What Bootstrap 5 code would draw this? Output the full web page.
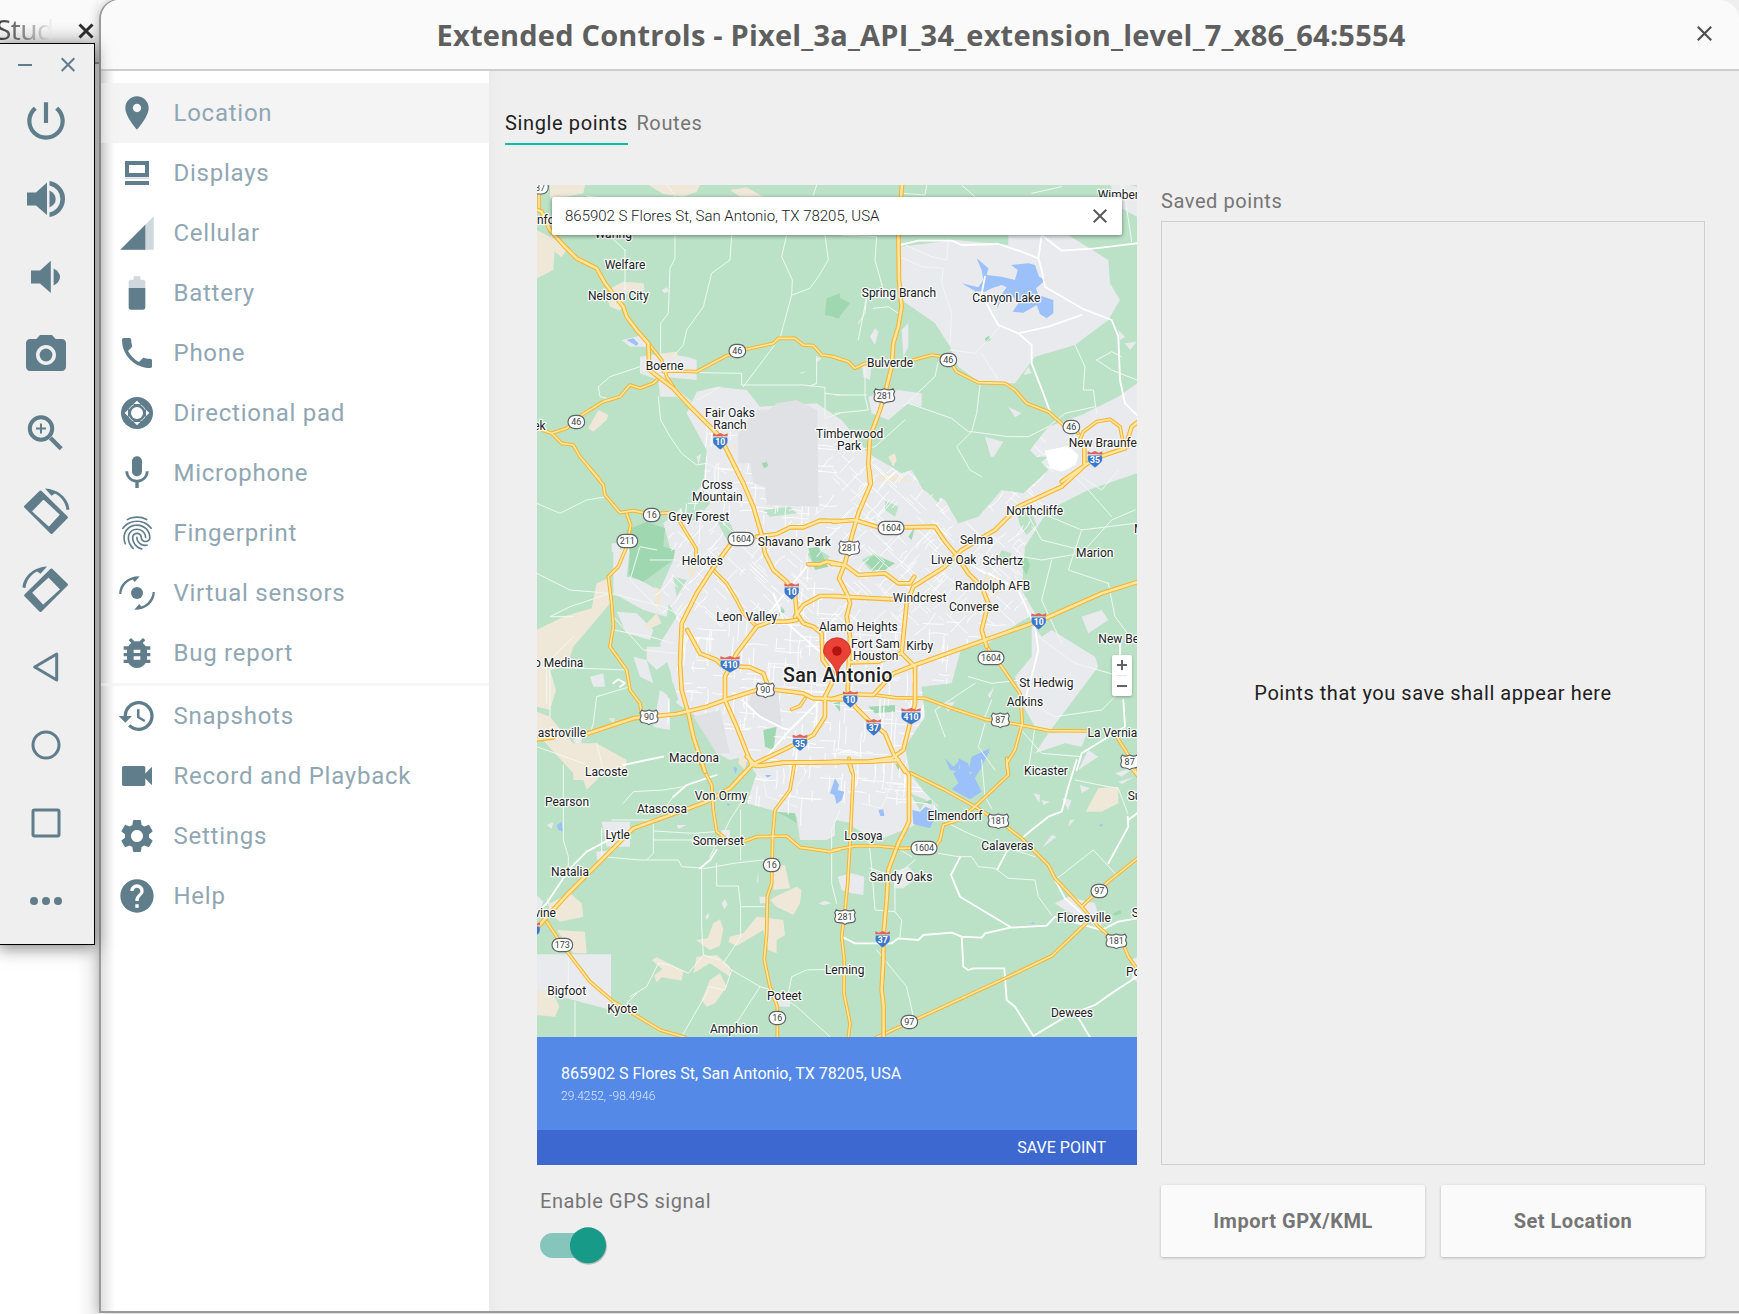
<!DOCTYPE html>
<html lang="en">
<head>
<meta charset="utf-8">
<title>Extended Controls</title>
<meta name="viewport" content="width=device-width, initial-scale=1">
<link href="https://cdn.jsdelivr.net/npm/bootstrap@5.3.0/dist/css/bootstrap.min.css" rel="stylesheet">
<style>
  body{width:1739px;height:1314px;overflow:hidden;background:#fff;font-family:Roboto,"Noto Sans",sans-serif;position:relative}
  svg{display:block;flex:none}
  .desk{position:absolute;inset:0 auto auto 0;width:99px;height:1314px;background:linear-gradient(90deg,rgba(0,0,0,0) 78%,rgba(0,0,0,.08)) #fff}
  .desk-tab{height:64px;background:linear-gradient(180deg,rgba(0,0,0,0) 35%,rgba(0,0,0,.14)),#fafafa;border-bottom:2px solid #989898}
  .desk-tab span{font:28px/1 "Noto Sans",sans-serif;letter-spacing:-.6px;margin-left:-4px;margin-top:3px;width:57px;overflow:hidden;background:linear-gradient(90deg,#444 10%,#999 55%,#eee 95%);-webkit-background-clip:text;color:transparent}
  .emu-bar{position:absolute;left:-2px;top:43px;width:97px;height:902px;background:#efefef;border:1px solid #000;z-index:3;box-shadow:0 3px 16px rgba(0,0,0,.5)}
  .emu-head{height:38px;padding:9px 19px 0 19px}
  .emu-tool{height:78px;padding-right:1px}
  .ink{fill:#607d8b;stroke:#607d8b}
  .win{position:absolute;left:99px;top:-1px;width:1650px;height:1314px;border:2px solid #9b9b9b;border-top-width:1px;border-radius:20px 0 0 0;background:#efefef;z-index:2;overflow:hidden;box-shadow:0 0 12px rgba(0,0,0,.28)}
  .win-title{height:71px;background:#fafafa;border-bottom:2px solid #cdcdcd;width:1638px;position:relative;border-radius:0 20px 0 0}
  .win-title h1{font:700 29px/1 "Open Sans","Noto Sans",sans-serif;color:#5f5f5f;margin:0;letter-spacing:.2px;padding-bottom:1px;padding-left:44px}
  .win-close{margin-right:27px;margin-bottom:3px}
  .win-body{width:1638px;height:1240px}
  .side{width:388px;background:linear-gradient(90deg,rgba(0,0,0,.12),rgba(0,0,0,0) 14px),#fff;padding-top:12px}
  .side-item{height:60px;padding-left:16px;font-size:24px;letter-spacing:.75px;color:#90a7b3;line-height:62px}
  .side-item.current{background:#f4f4f4}
  .side-item svg{margin-right:16.500px}
  .side-rule{height:3px;background:#f6f6f6}
  .pane{padding:34px 34px 0 0;background:linear-gradient(90deg,#ebebeb,#efefef 10px)}
  .lbl{font-size:20px;letter-spacing:.58px;color:#757575;line-height:24px}
  .loc-tabs{padding-left:16px;height:80px}
  .loc-tabs div{height:40px;padding-top:6px;margin-right:8.500px;white-space:nowrap;letter-spacing:.62px}
  .loc-tabs .on{color:#212121;border-bottom:2px solid #00bfa5}
  .cols{padding-left:48px;gap:24px}
  .map-col{width:600px}
  .map-box{width:600px;height:980px;position:relative}
  .find{position:absolute;left:15px;top:12px;width:570px;height:38px;background:#fff;border-radius:2px;box-shadow:0 1px 4px rgba(0,0,0,.45);padding:0 15px 0 13px;font-size:15px;font-weight:300;color:#202124}
  .zoomer{position:absolute;left:575px;top:470px;width:20px;height:41px;background:#fff;border-radius:2px;box-shadow:0 1px 3px rgba(0,0,0,.3)}
  .info{height:93px;background:#5489e8;color:#fff;padding:27px 24px 0;font-size:16px;line-height:20px}
  .info small{display:block;font-size:12px;font-weight:300;line-height:16px;margin-top:4px;opacity:.8}
  .save{height:35px;background:#3c68cf;color:#fff;font-size:16px;padding-right:31px}
  .gps{padding:24px 0 0 3px}
  .gps-switch{width:66px;height:37px;margin-top:14px}
  .saved{width:544px;padding-top:4px}
  .saved-box{height:944px;margin-top:8px;border:1px solid #cfcfcf;color:#212121;padding-bottom:1px;letter-spacing:.54px}
  .acts{margin-top:20px;gap:16px}
  .act{flex:1;height:72px;background:#fafafa;border:0;border-radius:2px;font-size:20px;font-weight:700;letter-spacing:.5px;color:#757575;box-shadow:0 1px 3px rgba(0,0,0,.24)}
  .places text{font-family:Roboto,sans-serif;font-size:36px;fill:#202124;stroke:#fff;stroke-opacity:.85;stroke-width:8px;stroke-linejoin:round;paint-order:stroke}
  .shield text{font-family:Roboto,sans-serif;font-size:27px;fill:#3c4043;text-anchor:middle}
</style>
</head>
<body>

<div class="desk">
  <div class="desk-tab d-flex align-items-start pt-2">
    <span class="pt-1">Stud</span>
    <svg class="ms-auto" style="margin:15px 5px 0 0" width="16" height="16"><path d="M1.500 1.500 14.500 14.500M14.500 1.500 1.500 14.500" stroke="#2f2f2f" stroke-width="3"/></svg>
  </div>
</div>

<div class="emu-bar d-flex flex-column ink">
  <div class="emu-head d-flex justify-content-between">
    <svg width="14" height="24"><path d="M0 12H14" stroke-width="2"/></svg>
    <svg width="14" height="24"><path d="M.7 5.300 13.300 18M13.300 5.300.7 18" stroke-width="2"/></svg>
  </div>
  <div class="emu-tool d-flex align-items-center justify-content-center"><svg width="50" height="50" viewBox="0 0 24 24" stroke="none"><path stroke="none" d="M13 3h-2v10h2V3zm4.830 2.170l-1.420 1.420C17.990 7.860 19 9.810 19 12c0 3.870-3.130 7-7 7s-7-3.130-7-7c0-2.190 1.010-4.140 2.580-5.420L6.170 5.170C4.230 6.820 3 9.260 3 12c0 4.970 4.030 9 9 9s9-4.030 9-9c0-2.740-1.230-5.180-3.170-6.830z"/></svg></div>
  <div class="emu-tool d-flex align-items-center justify-content-center"><svg width="48" height="48" viewBox="-24 -24 48 48"><g stroke="none"><path d="M-19-6.500h9L1-16.500V16L-10 6.500h-9z"/><path d="M3.500-8.500Q9.700-5.500 9.700 0T3.500 8.500z"/><path d="M3.500-18A18.200 18.200 0 0 1 3.500 18v-4.500A13.800 13.800 0 0 0 3.500-13.500z"/></g></svg></div>
  <div class="emu-tool d-flex align-items-center justify-content-center"><svg width="48" height="48" viewBox="-24 -24 48 48"><g stroke="none"><path d="M-15-6.500h9L4.800-16.300V16L-6 6.500h-9z"/><path d="M7.600-8.500Q14-5 14 0T7.600 8.500z"/></g></svg></div>
  <div class="emu-tool d-flex align-items-center justify-content-center"><svg width="48" height="48" viewBox="0 0 24 24"><g stroke="none"><circle cx="12" cy="12" r="3.200"/><path d="M9 2L7.170 4H4c-1.100 0-2 .9-2 2v12c0 1.100.9 2 2 2h16c1.100 0 2-.9 2-2V6c0-1.100-.9-2-2-2h-3.170L15 2H9zm3 15c-2.760 0-5-2.240-5-5s2.240-5 5-5 5 2.240 5 5-2.240 5-5 5z"/></g></svg></div>
  <div class="emu-tool d-flex align-items-center justify-content-center"><svg width="48" height="48" viewBox="-24 -24 48 48"><circle cx="-5" cy="-4.500" r="11.200" fill="none" stroke-width="4"/><path d="M-10-4.500H0M-5-9.500V.5" stroke-width="2"/><path d="M4.500 5 15.200 15.700" stroke-width="4.400"/></svg></div>
  <div class="emu-tool d-flex align-items-center justify-content-center"><svg width="50" height="50" viewBox="-25 -25 50 50"><g id="rot"><path fill-rule="evenodd" stroke-width="2.400" stroke-linejoin="round" d="M-20.800-4.300-5.400-19.300 20.700 6.300 5.500 21.800zM-15.700.5-2.600-13.200 15.500 3.500 3 17.300z"/><path d="M-1-22.500C12-22 22.500-13 23.500-1.500L20.500-1C19.500-9 15-14.500 9-17.500L5.500-15.300z" stroke="none"/></g></svg></div>
  <div class="emu-tool d-flex align-items-center justify-content-center"><svg width="50" height="50" viewBox="-25 -25 50 50"><use href="#rot" transform="scale(-1 1)"/></svg></div>
  <div class="emu-tool d-flex align-items-center justify-content-center"><svg width="48" height="48" viewBox="-24 -24 48 48"><path d="M-11.300 0 10.700-13V13z" fill="none" stroke-width="3" stroke-linejoin="round"/></svg></div>
  <div class="emu-tool d-flex align-items-center justify-content-center"><svg width="48" height="48" viewBox="-24 -24 48 48"><circle r="13" fill="none" stroke-width="3"/></svg></div>
  <div class="emu-tool d-flex align-items-center justify-content-center"><svg width="48" height="48" viewBox="-24 -24 48 48"><rect x="-13" y="-13" width="26" height="26" rx="1.500" fill="none" stroke-width="3"/></svg></div>
  <div class="emu-tool d-flex align-items-center justify-content-center"><svg width="48" height="48" viewBox="-24 -24 48 48"><g stroke="none"><circle cx="-12" r="4"/><circle r="4"/><circle cx="12" r="4"/></g></svg></div>
</div>

<div class="win">
  <div class="win-title d-flex align-items-center">
    <h1 class="flex-grow-1 text-center text-nowrap">Extended Controls - Pixel_3a_API_34_extension_level_7_x86_64:5554</h1>
    <svg class="win-close" width="15" height="15"><path d="M.8.8 14.200 14.200M14.200.8.8 14.200" stroke="#505050" stroke-width="2.200"/></svg>
  </div>
  <div class="win-body d-flex">
    <nav class="side flex-shrink-0" id="side"></nav>
    <main class="pane flex-grow-1">
      <div class="loc-tabs d-flex lbl"><div class="on">Single points</div><div>Routes</div></div>
      <div class="cols d-flex">
        <section class="map-col">
          <div class="map-box">
            <svg id="map" width="600" height="852" viewBox="537 185 600 852" style="background:#bbe2c6"></svg>
            <div class="find d-flex align-items-center justify-content-between"><span>865902 S Flores St, San Antonio, TX 78205, USA</span><svg width="14" height="14"><path d="M.7.7 13.300 13.300M13.300.7.7 13.300" stroke="#5a5a5a" stroke-width="2"/></svg></div>
            <div class="zoomer"><svg width="20" height="41"><path d="M5 10H15M10 5V15M5 31H15" stroke="#5f6368" stroke-width="2"/><path d="M5 20.500H15" stroke="#e6e6e6"/></svg></div>
            <div class="info">865902 S Flores St, San Antonio, TX 78205, USA<small>29.4252, -98.4946</small></div>
            <div class="save d-flex align-items-center justify-content-end">SAVE POINT</div>
          </div>
          <div class="gps">
            <div class="lbl">Enable GPS signal</div>
            <svg class="gps-switch" viewBox="0 0 66 37" overflow="visible"><rect y="6" width="60" height="25" rx="12.500" fill="#86c5bc"/><circle cx="48.500" cy="19.200" r="18.500" fill="#000" opacity=".22"/><circle cx="48" cy="18.300" r="18" fill="#189a89"/></svg>
          </div>
        </section>
        <section class="saved">
          <div class="lbl">Saved points</div>
          <div class="saved-box d-flex align-items-center justify-content-center lbl">Points that you save shall appear here</div>
          <div class="acts d-flex"><button class="act">Import GPX/KML</button><button class="act">Set Location</button></div>
        </section>
      </div>
    </main>
  </div>
</div>

<script>
// Navigation entries: label and icon on a 24-unit grid
const nav = [
 ['Location','<path d="M12 2C8.130 2 5 5.130 5 9c0 5.250 7 13 7 13s7-7.750 7-13c0-3.870-3.130-7-7-7zm0 9.500c-1.380 0-2.500-1.120-2.500-2.500s1.120-2.500 2.500-2.500 2.500 1.120 2.500 2.500-1.120 2.500-2.500 2.500z"/>'],
 ['Displays','<path fill-rule="evenodd" d="M4.800 4.800H19.200V14.400H4.800zM7.200 7.200V12H16.800V7.200z"/><path d="M4.800 16.800H19.200V19.200H4.800z"/><path opacity=".55" d="M4.800 14.800H19.200V15.300H4.800z"/>'],
 ['Cellular','<path opacity=".3" d="M2 22h20V2z"/><path d="M17 7L2 22h15z"/>'],
 ['Battery','<path opacity=".3" d="M17 5.330C17 4.600 16.400 4 15.670 4H14V2h-4v2H8.330C7.600 4 7 4.600 7 5.330V9h10z"/><path d="M7 9v11.670C7 21.400 7.600 22 8.330 22h7.330c.74 0 1.340-.6 1.340-1.330V9z"/>'],
 ['Phone','<path d="M6.620 10.790c1.440 2.830 3.760 5.140 6.590 6.590l2.200-2.200c.27-.27.67-.36 1.020-.24 1.120.37 2.330.57 3.570.57.55 0 1 .45 1 1V20c0 .55-.45 1-1 1-9.390 0-17-7.610-17-17 0-.55.45-1 1-1h3.500c.55 0 1 .45 1 1 0 1.250.2 2.450.57 3.570.11.35.03.74-.25 1.020l-2.200 2.200z"/>'],
 ['Directional pad','<circle cx="12" cy="12" r="9.600"/><g fill="#fff"><circle cx="12" cy="12" r="3.600"/><path d="M12 4.600 14 6.600H10zM12 19.400 14 17.400H10zM4.600 12 6.600 10V14zM19.400 12 17.400 10V14z"/></g><circle cx="12" cy="12" r="5.300" fill="none" stroke="#fff" stroke-width=".45" stroke-dasharray="4.160 4.160" stroke-dashoffset="-2.080"/>'],
 ['Microphone','<path d="M12 14c1.660 0 2.990-1.340 2.990-3L15 5c0-1.660-1.340-3-3-3S9 3.340 9 5v6c0 1.660 1.340 3 3 3zm5.300-3c0 3-2.540 5.100-5.300 5.100S6.700 14 6.700 11H5c0 3.410 2.720 6.230 6 6.720V21h2v-3.280c3.280-.48 6-3.300 6-6.720h-1.700z"/>'],
 ['Fingerprint','<path d="M17.810 4.470c-.08 0-.16-.02-.23-.06C15.660 3.420 14 3 12.010 3c-1.980 0-3.860.47-5.570 1.410-.24.13-.54.04-.68-.2-.13-.24-.04-.55.2-.68C7.820 2.520 9.860 2 12.010 2c2.130 0 3.990.47 6.030 1.520.25.13.34.43.21.67-.09.18-.26.28-.44.28zM3.500 9.720c-.1 0-.2-.03-.29-.09-.23-.16-.28-.47-.12-.7.99-1.400 2.250-2.500 3.750-3.270C9.980 4.040 14 4.030 17.150 5.650c1.500.77 2.760 1.860 3.750 3.250.16.22.11.54-.12.7-.23.16-.54.11-.7-.12-.9-1.260-2.040-2.250-3.390-2.940-2.870-1.470-6.540-1.470-9.400.01-1.360.7-2.500 1.700-3.400 2.960-.08.14-.23.21-.39.21zm6.250 12.070c-.13 0-.26-.05-.35-.15-.87-.87-1.340-1.430-2.010-2.640-.69-1.230-1.050-2.730-1.050-4.340 0-2.970 2.540-5.390 5.660-5.390s5.660 2.420 5.660 5.390c0 .28-.22.5-.5.5s-.5-.22-.5-.5c0-2.420-2.090-4.390-4.660-4.390-2.570 0-4.660 1.970-4.660 4.390 0 1.440.32 2.770.93 3.850.64 1.150 1.080 1.640 1.850 2.420.19.2.19.51 0 .71-.11.1-.24.15-.37.15zm7.170-1.850c-1.190 0-2.240-.3-3.100-.89-1.490-1.010-2.380-2.650-2.380-4.390 0-.28.22-.5.5-.5s.5.22.5.5c0 1.410.72 2.740 1.940 3.560.71.48 1.540.71 2.540.71.24 0 .64-.03 1.040-.1.27-.05.53.13.58.41.05.27-.13.53-.41.58-.57.11-1.070.12-1.210.12zM14.910 22c-.04 0-.09-.01-.13-.02-1.590-.44-2.630-1.030-3.720-2.100-1.400-1.390-2.170-3.240-2.170-5.220 0-1.620 1.380-2.940 3.080-2.940 1.700 0 3.080 1.320 3.080 2.940 0 1.070.93 1.940 2.080 1.940s2.080-.87 2.080-1.940c0-3.770-3.250-6.830-7.250-6.830-2.840 0-5.440 1.580-6.610 4.030-.39.81-.59 1.760-.59 2.800 0 .78.07 2.010.67 3.610.1.26-.03.55-.29.64-.26.1-.55-.04-.64-.29-.49-1.310-.73-2.610-.73-3.960 0-1.200.23-2.290.68-3.240 1.330-2.790 4.280-4.600 7.510-4.600 4.550 0 8.250 3.510 8.250 7.830 0 1.620-1.380 2.940-3.080 2.940s-3.080-1.320-3.080-2.940c0-1.070-.93-1.940-2.080-1.940s-2.080.87-2.080 1.940c0 1.710.66 3.310 1.870 4.510.95.94 1.860 1.460 3.270 1.850.27.07.42.35.35.61-.05.23-.26.38-.47.38z"/>'],
 ['Virtual sensors','<circle cx="12" cy="12" r="3.600"/><g id="vs"><path d="M1.300 12.600C1.300 6.500 6.500 1.700 13.600 1.900L10.700 5.400 9.300 3.900C5.500 5.300 3 8.600 2.600 12.600z"/></g><use href="#vs" transform="rotate(180 12 12)"/>'],
 ['Bug report','<path d="M20 8h-2.810c-.45-.78-1.070-1.450-1.820-1.960L17 4.410 15.590 3l-2.170 2.170C12.960 5.060 12.490 5 12 5c-.49 0-.96.06-1.410.17L8.410 3 7 4.410l1.620 1.630C7.880 6.550 7.260 7.220 6.810 8H4v2h2.090c-.05.33-.09.66-.09 1v1H4v2h2v1c0 .34.04.67.09 1H4v2h2.810c1.040 1.790 2.970 3 5.190 3s4.150-1.210 5.190-3H20v-2h-2.090c.05-.33.09-.66.09-1v-1h2v-2h-2v-1c0-.34-.04-.67-.09-1H20V8zm-6 8h-4v-2h4v2zm0-4h-4v-2h4v2z"/>'],
 null,
 ['Snapshots','<path d="M13 3c-4.970 0-9 4.030-9 9H1l3.890 3.890.07.14L9 12H6c0-3.870 3.130-7 7-7s7 3.130 7 7-3.130 7-7 7c-1.930 0-3.680-.79-4.940-2.060l-1.420 1.420C8.270 19.990 10.510 21 13 21c4.970 0 9-4.030 9-9s-4.030-9-9-9zm-1 5v5l4.280 2.540.72-1.210-3.500-2.080V8H12z"/>'],
 ['Record and Playback','<path d="M17 10.500V7c0-.55-.45-1-1-1H4c-.55 0-1 .45-1 1v10c0 .55.45 1 1 1h12c.55 0 1-.45 1-1v-3.500l4 4v-11l-4 4z"/>'],
 ['Settings','<path d="M19.140 12.940c.04-.3.06-.61.06-.94 0-.32-.02-.64-.07-.94l2.030-1.580c.18-.14.23-.41.12-.61l-1.920-3.320c-.12-.22-.37-.29-.59-.22l-2.390.96c-.5-.38-1.030-.7-1.620-.94l-.36-2.540c-.04-.24-.24-.41-.48-.41h-3.840c-.24 0-.43.17-.47.41l-.36 2.540c-.59.24-1.130.57-1.620.94l-2.390-.96c-.22-.08-.47 0-.59.22L2.740 8.870c-.12.21-.08.47.12.61l2.030 1.580c-.05.3-.09.63-.09.94s.02.64.07.94l-2.030 1.580c-.18.14-.23.41-.12.61l1.920 3.320c.12.22.37.29.59.22l2.390-.96c.5.38 1.030.7 1.620.94l.36 2.540c.05.24.24.41.48.41h3.840c.24 0 .44-.17.47-.41l.36-2.540c.59-.24 1.130-.56 1.620-.94l2.390.96c.22.08.47 0 .59-.22l1.920-3.320c.12-.22.07-.47-.12-.61l-2.010-1.580zM12 15.600c-1.980 0-3.600-1.620-3.600-3.600s1.620-3.600 3.600-3.600 3.600 1.620 3.600 3.600-1.620 3.600-3.600 3.600z"/>'],
 ['Help','<path d="M12 2C6.480 2 2 6.480 2 12s4.480 10 10 10 10-4.480 10-10S17.520 2 12 2zm1 17h-2v-2h2v2zm2.070-7.750l-.9.920C13.450 12.900 13 13.500 13 15h-2v-.5c0-1.100.45-2.100 1.170-2.830l1.240-1.260c.37-.36.59-.86.59-1.410 0-1.100-.9-2-2-2s-2 .9-2 2H8c0-2.210 1.790-4 4-4s4 1.790 4 4c0 .88-.36 1.680-.93 2.250z"/>']
];
document.getElementById('side').innerHTML = nav.map((n,i)=> n
  ? `<div class="side-item d-flex align-items-center${i?'':' current'}"><svg width="40" height="40" viewBox="0 0 24 24" fill="#607d8b">${n[1]}</svg>${n[0]}</div>`
  : '<div class="side-rule"></div>').join('');

// Map sheets, each drawn at three units per pixel from its own origin
const sheet = {A:[530,180],B:[835,180],C:[530,470],D:[835,470],E:[530,760],F:[835,760]};
const at = (k,body)=>`<g transform="translate(${sheet[k]}) scale(.33333)">${body}</g>`;
const paths = o => Object.keys(o).map(k=>at(k,`<path d="${o[k]}"/>`)).join('');

const urban = {
 C:'M470-170 500-235 560-250 650-240 690-190 860-200 935-150 1015-50 1115 10 1145 0 1180 60 1245 90 1285 160 1345 140 1415 60 1480 70 1555 0 1500-60 1555-130 1695-180 1821-190V10L1675 60 1555 120 1485 230 1475 360 1515 430 1415 490 1375 520 1295 530 1265 640 1175 650 1185 740 1125 830 1140 910 1225 1020 1145 1070 1045 1110 965 1070 890 1110H810L800 1040 650 1000 680 910 640 860 600 870 560 850 500 740 440 700 420 600 390 520 440 440 390 360 430 270 400 160 470 100 520 40 530-60zM250 245 300 230 290 320 250 330zM250 310 330 330 420 380 410 440 340 420 250 370zM260 425 320 430 370 480 360 510 290 490zM350 530 400 530 420 570 380 600 350 570zM390 660 420 680 420 780 370 770zM310 560 350 570 370 640 330 620zM130 810 160 780 150 840zM180 620 220 610 225 650 190 650zM245 220h25v25h-25z',
 B:'M195 200 360 180 520 195V165H700L820 240 825 310 855 360 820 420 720 495 600 530 540 610H510L430 605 370 560 345 500 300 430 200 360zM820 0 906 20V110L850 80zM105 470l15-25 10 10-10 40zM200 450l20-20V500l-15 30zM80 550h30l-5 50-20-10zM100 650 190 630 260 640V680L220 670 160 720 110 700zM520 680l40 20-20 12zM450 770l55 15-35 55zM850 450l20 20-15 10zM870 490l35-5-20 25zM565 585l15-25 10 20zM750 700l100-50 56-40V860L850 790 740 740z',
 A:'M275 480 340 465 350 500 300 500zM330 530 400 520 470 530 500 540 500 600 400 590 490 670 470 675 440 650 390 650 385 600 330 580zM395 330l15-8 8 12-15 6zM500 830l15-10-10 35zM812 577l20-3-20 8zM860 530l15 5-15 12z',
 D:'M590 460 620 500 650 480 780 560 790 590 640 790 600 770 560 700 540 620 590 560zM440 650l40-5-15 40zM320 700l40-5-20 30zM640 790 760 780 740 830 690 820 600 850zM760 840l30 20-60 40zM740 440l60-20 20 30-60 40z',
 E:'M20 583H243V750L130 720 20 690zM215 185h85v75h-70zM198 275l60-5-55 35zM20 405l20 20-20 50zM575 430l10-12 8 15-10 15zM526 470l8-12 4 10-8 12zM575 210h25v35h-30zM440 195h30l-25 12zM865 430l20-8 20 8-25 5zM685 330l-5 40 5-5zM688 410h20v20h-18zM740 700h40v40h-35zM50 195l20-8-5 20z',
 F:'M8 350 50 340 88 350 85 405 50 400 20 390zM175 335 220 320 250 350 205 385 178 385zM660 430 700 410 780 430 800 500 690 450zM595 100l20 5-2 25zM620 120l25 5-20 10zM680 115l30 5-10 30zM650 225l15 5-45 35zM705 180l15-2-20 22zM735 75l30 10-25 15zM840 40l60-20-40 30zM890 600l16-10V665l-16-10zM850 65l50-15-40 22z'
};
const dim = {C:'M680-180 720-182 740-200 800-210 862-180 866 110 710 105 705 50 670 40 660-20 625-20V-110zM680 640 745 660 755 770 690 745 655 700zM490 740 570 720 600 850 560 850z'};
const sand = {
 A:'M60 15H165L160 40 110 50 60 55zM20 150 60 170 75 190 70 270 20 295zM60 160 115 200 95 232 75 215zM355 15H510L500 35 460 50 400 42zM600 30 650 22 700 50H630zM250 320 280 305 340 310 345 330 290 340 270 392 240 380 230 350zM175 745 205 690 235 705 230 720 190 755zM400 520l40-5 5 20h-40zM605 790l15 5-5 20z',
 C:'M20 480 100 440 185 415 200 340 235 325 240 400 190 460 130 530 110 590 60 600 78 660 60 720 20 710zM20 725 60 740 100 790 130 820 200 820 290 870 285 910H130L20 790zM340 470 380 430 395 460 350 480zM470 290l40 5-30 30zM375 350l20 10-5 60-15-10zM630 850l20 20-5 30-20-20zM235 745l20 0-5 15z',
 E:'M130 0H290L230 25 200 60 170 90 160 60 130 60zM50 410 60 430 120 400 155 430 160 470 90 485 60 460zM80 510 165 515 170 580 130 580zM20 690 70 700 88 740 75 770 20 765zM730 320 765 315 780 385 730 390zM735 410 800 380 815 390 810 430 790 465 740 440 720 420zM680 470 760 480 765 525 740 540 740 580 715 570 700 510 620 558 595 545 600 530 640 520zM550 490l20-12 10 30-10 50-30 12-42-30 35-5zM365 600l15-8 80 40-5 30-60-10-15 15-8-20 25-20zM500 590l60-5 40 35 0 30-60-40-50 30zM540 660l30-20 20 40-35 50-25 10-15-20z',
 D:'M445 310l50 20 20 30-50 25-20-40z',
 B:'M160 830l20-10 5 20-10 20zM120 905l30-25 60 10 15 15z',
 F:'M752 155 790 85 850 80 850 130 800 155z'
};
const wood = {
 C:'M290 180 350 155 405 175 400 230 435 240 430 270 340 335 295 315 300 250zM700 780l40-10-10 70-25-10zM835 235l30-5 30 60-40 10zM745 440l10-30 10 15zM910 700l20-5v30z',
 A:'M890 355 930 340V415L885 405zM695 850l15-5 5 12-12 8z',
 B:'M0 345 45 370 10 415 0 415zM450 475l12-8 5 12-15 8z',
 D:'M90 275l30-20 60 25-30 20-35 0zM545 270l30-10 10 25-10 30zM100 710l80-5v20l-60 5zM220 200l20-30-10 40z',
 E:'M735 155l60 5 5 30-30-20z',
 F:'M260 130l30-12 0 15zM835 460l20-10 5 10-22 8zM180 10l20 10-10 10z'
};
const parks = {
 C:'M450 110 520 60 540 100 500 150 470 150zM560 150 600 160 620 200 590 210zM700 120 780 110 800 130 720 140zM430 320 470 330 440 380zM430 640 400 640 420 700 445 690zM665 680 690 690 680 710zM830 250 870 240 900 260 860 300z',
 D:'M150 90 190 110 180 140 150 120zM350 20 440 30 430 90 370 150 345 90zM80 270l40-20 50 30-60 25zM270 60 320 50 310 100zM620 240 700 200 690 260zM250 5l60 20 20 30-60-10zM360 610 500 620 440 700 350 650zM200-40 640-40 560 20 500 0 420 70 340 20zM545 130l40-15 20 50-30 30-20-30zM500 240l30 10-10 30-30-20z',
 F:'M225 100l50 20-20 30zM0 180l50 10 30 70-80-20z'
};
const water = {
 B:'M425 235 460 265 455 285 500 290 540 300 548 270 528 255 580 250 600 255 612 290 632 300 603 325 610 345 655 360 655 400 635 415 615 402 605 375 565 398 533 395 550 370 525 340 500 358 485 388 495 350 515 322 500 315 470 325 450 335 420 333 380 310 430 322 445 300 440 270z',
 F:'M335 0 355 40 375 25 370-5 400 10 405 45 435 0 465-30 440 20 420 55 440 95 405 118 350 88 370 70zM232 150 255 155 272 140 300 152 300 175 285 205 235 192zM0 55 12 75 8 90 28 95 20 120 5 132-2 105-15 100-10 85zM130 150l15-2 3 20-12 0zM585 490l15-3-5 6zM790 195l14-3-5 8z',
 D:'M330 865 355 890 375 870 370 905 345 900zM400 905 410 860 465 835 440 880 430 905z',
 A:'M290 480l20-5 15 15-5 8z',
 E:'M80 195l15-10 3 30-12-5zM590 130l12 3-8 6zM610 20l12 5-6 18zM705 45l20 0-12 8z'
};
const lanes = {
 A:'M170 48 260 60M410 15 435 45V235L420 265 415 400 392 430V520M605 165 600 240 545 280 520 380 470 450 460 495 430 530M770 165 755 230 787 300 785 345 750 475M860 15 850 45M885 165 895 240 865 290 840 325 787 345M285 210V330M235 165 285 210M330 560 240 590 205 620 210 650 230 655M385 650 392 720 420 770 455 820 500 855 530 850 590 880M510 578 635 580V615H820L885 622V715L930 700M640 620 700 540 745 480M885 640 930 645M860 530V610L840 618M500 660 540 640 570 620',
 B:'M20 165 125 170 120 240 145 330M70 480 95 350 90 400 70 430M275 15 270 45 200 40M380 15 420 50M590 40 680 20M860 15 870 50 890 185M90 560V650L100 690 0 700M220 670 350 715 400 755 410 755 520 770 580 770 640 740 690 700 780 680M435 615 425 700 410 755 365 800 405 870 440 890M345 510 420 520 440 500 500 435M440 520 490 600M200 190 290 230 335 240 340 180M195 230 260 260 325 265 320 310 350 400 345 490M310 545 300 590 205 680M720 495 750 560 745 630 775 630 785 700M785 540 830 515 860 530M785 540 830 570 906 600M115 385 160 380 190 400M210 720 120 800 10 820M0 645 95 645',
 C:'M20 100 90 130 170 90 230 80M20 310 120 360 240 370 400 410 460 440M240 370 120 410 60 440 130 440M20 590 160 595 290 600M300 650 200 680 190 760 180 790M200 820 220 900M20 830 160 880M250 440 340 540 440 550M250 480 360 500 430 520M130 500 50 580 50 700M440 270 360 270M380 240 330 230 300 330 400 430M60 600V740',
 D:'M560 100 620 210 740 240M620 130 740 180 900 160M740 180 700 300 820 340M560 260 620 270 740 250 830 150 900 120M820 340 840 440 900 520M610 500 720 580 860 620M650 270 620 390 680 520M560 630 470 640 400 620M590 700 660 740 800 720 860 660M540 300 480 280 430 250M700 0 760 60 830 140M850 0 800 60 740 20M420 640 300 720 330 800M450 760 430 830 480 900M550 770 620 850 740 860M470 690 450 740M600 770 580 900',
 E:'M215 205V290L330 300H445L455 320 530 325 610 310 700 300M515 325V500L520 585M560 310V378H625L632 440V530L580 610 605 630 690 680 725 690M632 440H705M370 180V280L350 300M370 213 490 220 560 215M370 240 500 240M300 710 350 680 385 610 420 615 475 640 520 585 570 600M245 180H370M430 110 400 150M280 130 310 95 400 90 460 80 540 50M605 630 585 690 535 680M455 830 535 690M600 820 690 680M100 15V240L115 290V340M135 725V830M775 700 785 650 830 630 900 628M740 700 800 740 900 830M632 150V300M632 130 600 180 575 230M540 290 560 250M115 590V690M290 730 320 700M700 60 670 30M700 60 710 110 800 140M930 150 905 210 905 370 920 430M840 20 800 80',
 F:'M100 230 110 320 120 450 180 455V350M180 455 200 480 195 530M125 570 215 680 235 770M310 280 370 290 410 290 430 320 480 325 520 355 600 360 610 410 650 465M330 185 400 220 460 245 600 290M660 360 775 270 840 340M440 0 450 110 470 145M720 60 820 80 850 85 878 160M80 130 140 145 170 70M230 290 180 260M150 65 210 120M230 60 310 140M105 325 180 350 240 300'
};
const roads = {
 B:'M195 195 250 182 350 182 380 195 490 192 560 215 610 235 620 270 630 320 740 385 830 420 850 470 855 600 870 670 906 705M620 165 680 212 780 205 905 190M620 165 610 235M450 290 440 340 470 400 490 435 550 460 640 440 740 405M550 460 590 495 590 550 625 640 645 695',
 D:'M460 310 550 360 600 470 610 540 595 600 570 690M865 690 870 770 820 800 740 850 725 900M855 500 855 610M370 260 450 310',
 F:'M725 0 700 80 680 155 640 170 590 210 560 235M515 275 487 328M375 292 348 345 375 410 525 500M20 530 60 550H170L190 535 250 540 265 525 350 518 380 530 440 533 450 520 525 503 635 497 660 470 800 510 850 485 906 475M380 530 385 620 400 630 415 625H508L515 720 540 740 595 828 700 765 780 735 830 700 906 650M728 770 765 832M878 170 880 200 820 310M655 350 690 415 740 460 810 520M906 160 880 180',
 E:'M255 230 170 275 120 325 90 370 50 430 30 450M280 15 350 0 400-10M560 270 540 300 510 325M430 110 470 75 560 45',
 C:'M635 690 690 740 760 775 780 780 900 660M800 840 797 900M780 780 700 870M830 290 740 400 690 470M730 370 760 450 870 545M250 640 265 628 285 640 270 650M860 785V690'
};
const minor = {
 A:'M27 15V90M400 575 430 573 500 575 590 527 640 510 730 490 745 475 795 475 820 495 850 497 875 525 900 528 930 537M385 595 370 610 330 625 300 615 270 650 220 665 155 705 110 745 65 760 20 745M65 760 95 790 130 795 150 830 210 900M355 490 395 540 410 590 430 620',
 B:'M-5 530 40 545 60 565 90 550 130 552M235 540 290 525 320 530 345 545 365 575 430 608 510 610 540 630 575 670 640 695 690 740 730 760M730 790 745 755 785 725 825 718 855 740 865 790 880 800',
 C:'M175-10 220 45 225 75 270 128 310 122 340 128M390 130 420 128 440 140 470 190 498 235V265M545 295 590 340 620 390 640 430 680 470M290 130 302 165 290 230 265 290 235 320 245 400 250 470 240 530 290 600 300 660 330 700 335 735M785 718 810 708 825 685',
 D:'M455 530 500 590 555 670 562 760 540 840 515 880 520 910M120 675 180 683 270 685 350 715 450 748 540 762 640 782 760 783M845 800 880 855 905 910M40 875 50 905',
 E:'M512 10 545 75 550 150 560 215 600 245M640 245 680 230 770 228 810 262 900 275 930 268M793 15 780 90 735 150 728 230 725 370 712 410 710 520 703 600 720 680 742 740 742 835M50 485 100 560 180 665 250 725 390 810 465 832',
 F:'M515-5 520 45 420 140 370 180 325 195 315 240 300 262 200 265 130 258 60 258-5 270M225 38 330 90 420 140 460 165M515 200 560 235 640 315 660 355 740 440 790 500 815 522M868 560 880 590 905 625M910 293 820 365 740 440M755 488 650 588 510 655 380 715 250 775 125 832M42-5 55 45 45 250 38 370 30 450 20 530 28 600 27 700 45 790 40 835M885 20 910 50'
};
const major = {
 A:'M10 85 35 95 60 150 100 195 140 235 200 265 225 310 260 355 280 380 290 410 320 450 355 490 358 570 430 625 480 680 570 770 600 830 640 910',
 B:'M202 0 190 165 192 300 200 380 190 440 175 490 170 560 150 640 135 690 105 770 100 850 105 910M748 790V850M680 905 780 835 870 805 890 740 910 725',
 C:'M612-15 640 40 670 110 695 195 705 250 730 300 770 335 795 370 800 430 820 460 850 470 875 490 878 570 908 610 905 640 885 680 885 740 850 795 760 840 665 885M800 450 770 455 720 455 680 470 620 550 585 620V690L620 770 665 885 690 888 760 878 930 876M795 440 820 405 870 378 930 378M680 200 740 192 780 172 820 172 870 152 930 153M600 225 545 300 500 370 455 460 450 580 455 660 475 730 490 800 525 905M20 808 70 802M175 790 310 745 440 732 530 710 585 690 680 660 740 660 820 670 850 685 940 688M472 480 510 550 560 570 575 585M630 590 660 592 700 610 715 650M835 283 870 283 890 275 930 282',
 D:'M103 0 108 40 70 130 50 200 30 280 12 325 40 380 45 400 35 440 45 500 42 570 38 660 60 710 100 750 150 790 175 850 210 905M-10 688 40 672 115 675 175 610 240 585 450 510 620 450 800 370 910 335M740-5 680 50 550 110 480 180 380 240 330 290 235 350 215 400 200 550 240 590V700L225 760 205 840 170 865 100 875-10 876M-10 378 60 382 175 388M-5 155 60 150 130 172M205 172 300 170 330 215 360 250 400 310 440 350 460 400 440 480 455 530M45 577 130 575 195 550M-10 282 30 285 70 315 150 310 190 340 225 340 238 320',
 E:'M670 10 600 85 530 125 450 155 310 205 270 245 190 325 110 405 60 460 20 505M650-10 680 18 760 8 930 6',
 F:'M180-10 222 45V185L190 250 160 330 155 420 145 530V600L140 690 146 740V840M-5 6 100 5 190 0'
};
const names = [
 ['A','Waring',250,172],['A','Welfare',285,267],['A','Nelson City',265,360],['A','Boerne',404,570],['A','Fair Oaks',600,711],['A','Ranch',600,747],['A','nfo',21,131,'start'],['A','ek',47,750,'end'],
 ['B','Spring Branch',192,349],['B','Canyon Lake',514,366],['B','Bulverde',165,561],['B','Timberwood',44,774],['B','Park',42,810],['B','New Braunfe',701,801,'start'],['B','Wimber',788,56,'start'],
 ['C','Cross',562,57],['C','Mountain',562,93],['C','Grey Forest',506,153],['C','Shavano Park',793,228],['C','Helotes',517,285],['C','Leon Valley',650,453],['C','o Medina',160,591,'end'],['C','astroville',168,801,'end'],['C','Macdona',492,876],
 ['D','Alamo Heights',70,483],['D','Northcliffe',599,135],['D','Selma',425,222],['D','Live Oak',356,282],['D','Schertz',503,285],['D','Marion',779,261],['D','Randolph AFB',473,360],['D','Windcrest',254,396],['D','Converse',417,423],['D','Fort Sam',121,534],['D','Houston',122,570],['D','Kirby',254,540],['D','New Be',790,519,'start'],['D','St Hedwig',634,651],['D','Adkins',570,708],['D','La Vernia',832,801],['D','M',897,189,'start'],
 ['E','Lacoste',229,48],['E','Pearson',111,138],['E','Atascosa',396,159],['E','Von Ormy',573,120],['E','Lytle',263,237],['E','Somerset',565,255],['E','Natalia',120,348],['E','vine',78,471,'end'],['E','Bigfoot',110,705],['E','Kyote',277,757],['E','Amphion',612,817],['E','Poteet',763,720],
 ['F','Leming',29,640],['F','Kicaster',633,45],['F','Elmendorf',360,180],['F','Losoya',85,238],['F','Calaveras',517,268],['F','Sandy Oaks',198,363],['F','Floresville',747,486],['F','Dewees',711,771],['F','Su',878,119,'start'],['F','S',890,471,'start'],['F','Po',873,648,'start']
];
const shields = [
 ['o','A',46,622,513],['o','A',46,139,726],['o','A',87,30,22],['o','C',16,365,135],['o','C',211,292,213],['o','C',1604,633,207],['o','D',1604,168,174],['o','D',1604,468,564],['o','E',16,725,315],['o','E',173,97,555],['o','E',16,742,774],['o','F',1604,267,264],['o','F',97,793,393],['o','F',97,223,786],['o','B',46,340,540],['o','B',46,709,741],
 ['u','B',281,148,647],['u','D',281,43,234],['u','D',87,496,750],['u','D',87,884,876],['u','C',90,706,660],['u','C',90,357,741],['u','F',181,490,183],['u','F',281,30,470],['u','F',181,844,543],
 ['i','A',10,571,783],['i','B',35,780,837],['i','C',10,785,363],['i','C',410,600,582],['i','C',35,810,817],['i','D',10,611,453],['i','D',410,228,738],['i','D',10,46,687],['i','D',37,116,771],['i','F',37,143,537],['i','E','',8,510]
];
function shield([t,k,n,x,y]){
  const len = Math.max(2,String(n).length), w = t=='o' ? [50,62,78][len-2] : t=='u' ? [54,62][len-2] : [46,60][len-2], h = w/2;
  let s;
  if(t=='o') s = `<rect x="${-h}" y="-20" width="${w}" height="40" rx="20" fill="#fff" stroke="#5f6368" stroke-width="3.500"/><text y="10">${n}</text>`;
  else if(t=='u') s = `<path d="M${-h+5}-21Q${-h/2}-14 0-21Q${h/2}-14 ${h-5}-21L${h}-12Q${h-6}-4 ${h} 6Q${h} 18 ${h-14} 18Q6 18 0 23Q-6 18 ${-h+14} 18Q${-h} 18 ${-h} 6Q${-h+6}-4 ${-h}-12z" fill="#fff" stroke="#5f6368" stroke-width="3.500" stroke-linejoin="round"/><text y="10">${n}</text>`;
  else s = `<path d="M${-h+2}-11H${h-2}Q${h+3} 8 ${h-10} 15 7 22 0 26-7 22 ${-h+10} 15${-h-3} 8 ${-h+2}-11z" fill="#3b78c9" stroke="#fff" stroke-opacity=".6" stroke-width="1.500"/><path d="M${-h+1}-14V-23L${-h/2}-19 0-24 ${h/2}-19 ${h-1}-23V-14z" fill="#dd6560"/><text y="13" style="fill:#fff;font-weight:700;font-size:26px">${n}</text>`;
  return at(k,`<g class="shield" transform="translate(${x} ${y})">${s}</g>`);
}
// Deterministic neighbourhood streets inside the built-up area
let seed = 11; const rnd = ()=> (seed = (seed*16807)%2147483647)/2147483647;
let streets = '';
for(let i=0;i<950;i++){
  const x = 400+rnd()*1150, y = -150+rnd()*1150, a = (x>900&&y<450||x<800&&y>150&&y<450 ? .75 : .06)+(rnd()<.5?0:Math.PI/2), l = 20+rnd()*75;
  const dx = Math.cos(a)*l, dy = Math.sin(a)*l, k = (rnd()-.5)*18;
  streets += `M${x|0} ${y|0}q${(dx/2+k)|0} ${(dy/2+k)|0} ${dx|0} ${dy|0}`;
}
const clip = `<clipPath id="town"><path transform="translate(530 470) scale(.33333)" d="${urban.C}"/></clipPath>`;
const fillG = (c,o)=>`<g fill="${c}">${paths(o)}</g>`;
const line = (c,w,o)=>`<g fill="none" stroke="${c}" stroke-width="${w}" stroke-linejoin="round" stroke-linecap="round">${paths(o)}</g>`;
document.getElementById('map').innerHTML =
  `<defs>${clip}</defs>` + fillG('#e8eaed',urban) + fillG('#bbe2c6',parks) + fillG('#efe8d8',sand) + fillG('#9fd8b0',wood) +
  `<g clip-path="url(#town)">${at('C',`<path d="${streets}" fill="none" stroke="#fff" stroke-width="2.600"/>`)}</g>` + fillG('#dfe1e5',dim) +
  at('A','<path fill="#9fd8b0" d="M695 850l15-5 5 12-12 8z"/>') +
  at('B','<path fill="#fff" d="M628 812 700 798 730 825 722 855 680 875 645 865z"/>') + fillG('#9cc0f9',water) +
  line('#f0f8f2',3,lanes) + line('#fff',5.500,roads) +
  line('#f6b42c',11,minor) + line('#ffe5a0',5,minor) + line('#f6b42c',14,major) + line('#ffe5a0',7.500,major) +
  shields.map(shield).join('') +
  `<g class="places" transform="translate(0 .5)">${names.map(([k,t,x,y,a])=>at(k,`<text x="${x}" y="${y}" text-anchor="${a||'middle'}">${t}</text>`)).join('')}` +
  at('D','<text x="8" y="634" text-anchor="middle" style="font-size:59px;font-weight:500" textLength="328">San Antonio</text>') + '</g>' +
  '<path d="M837 676C836 668 832 664 828 659.500 825 656 823.500 654 823.500 651A13.500 13.300 0 0 1 850.500 651C850.500 654 849 656 846 659.500 842 664 838 668 837 676z" fill="#ea4335" stroke="#c5221f" stroke-width=".7"/><circle cx="837" cy="651" r="4.800" fill="#b31412"/>';
</script>
<script src="https://cdn.jsdelivr.net/npm/bootstrap@5.3.0/dist/js/bootstrap.bundle.min.js"></script>
</body>
</html>
